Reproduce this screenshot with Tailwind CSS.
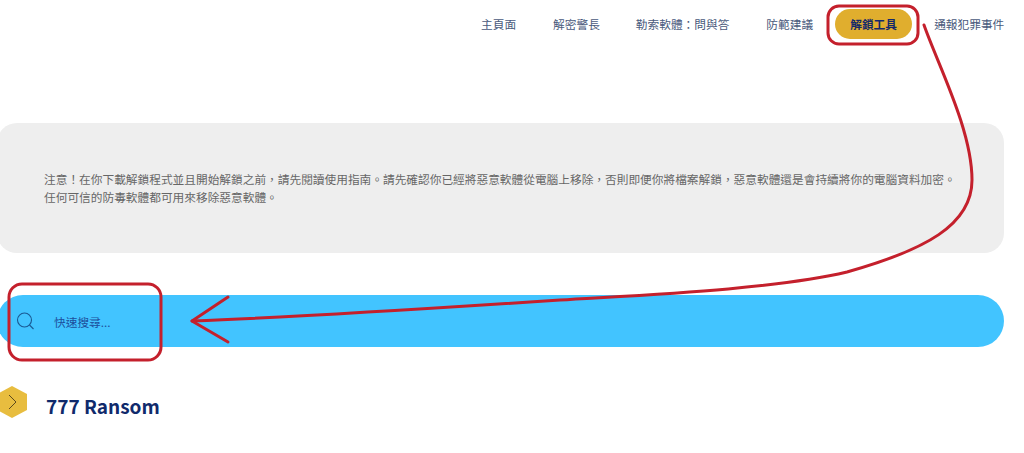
<!DOCTYPE html>
<html lang="zh-Hant">

<head>
    <meta charset="UTF-8">
    <meta name="viewport" content="width=device-width, initial-scale=1.0">
    <script src="https://cdn.jsdelivr.net/npm/@tailwindcss/browser@4"></script>
    <title>解鎖工具</title>
</head>

<body class="bg-white overflow-hidden font-['Noto_Sans_CJK_TC',sans-serif]">
    <div class="relative w-[1024px] h-[453px] overflow-hidden">
        <nav class="flex items-center h-[48px] pl-[481px] text-[11.7px] text-[#4a5a7c] whitespace-nowrap">
            <a class="mr-[37px]">主頁面</a>
            <a class="mr-[36px]">解密警長</a>
            <a class="mr-[37px]">勒索軟體&#xFF1A;問與答</a>
            <a class="mr-[22px]">防範建議</a>
            <a class="flex items-center justify-center w-[77px] h-[30px] rounded-full bg-[#e0ae2e] font-bold text-[#14296b] mr-[22px]">解鎖工具</a>
            <a>通報犯罪事件</a>
        </nav>

        <div class="mt-[75px] -ml-[3px] w-[1007px] h-[130px] flex items-center rounded-[20px] bg-[#eeeeee] pl-[47px] text-[11.7px] leading-[18px] text-[#666666] whitespace-nowrap">
            <p>注意&#xFF01;在你下載解鎖程式並且開始解鎖之前&#xFF0C;請先閱讀使用指南&#x3002;請先確認你已經將惡意軟體從電腦上移除&#xFF0C;否則即便你將檔案解鎖&#xFF0C;惡意軟體還是會持續將你的電腦資料加密&#x3002;<br>任何可信的防毒軟體都可用來移除惡意軟體&#x3002;</p>
        </div>

        <div class="mt-[42px] -ml-[3px] w-[1007px] h-[52px] flex items-center rounded-[26px] bg-[#42c4ff] pl-[19px] text-[11.7px] text-[#1d4f9c]">
            <svg class="w-[19px] h-[19px] mr-[19px]" viewBox="0 0 19 19" fill="none" stroke="#1a5a94" stroke-width="1.1">
                <circle cx="8.5" cy="8" r="7"></circle>
                <path d="M13.5 13l4 4"></path>
            </svg>
            <span class="pt-[1px]">快速搜尋...</span>
        </div>

        <div class="mt-[39px] flex items-start">
            <svg class="w-[27px] h-[32px] mr-[19px]" viewBox="0 0 27 32">
                <path d="M12 0L27 8v16L12 32L-3 24V8z" fill="#e8bd3f"></path>
                <path d="M9 9l7 7-7 7" fill="none" stroke="#5c4a1e" stroke-width="1"></path>
            </svg>
            <h2 class="mt-[6px] text-[19px] leading-[28px] font-bold text-[#102a6b]">777 Ransom</h2>
        </div>

        <!-- red hand drawn notes on top of the page -->
        <svg class="absolute inset-0 pointer-events-none" width="1024" height="453" viewBox="0 0 1024 453" fill="none" stroke="#c4202c" stroke-width="3" stroke-linecap="round" stroke-linejoin="round">
            <rect x="828" y="6" width="90" height="38" rx="11"></rect>
            <rect x="9" y="284" width="152" height="76" rx="13"></rect>
            <path d="M924 25C938 65 972 130 972 180C972 225 925 250 847 272C770 290 640 295 560 300C440 308 300 317 192 321"></path>
            <path d="M228 297L192 321L228 342"></path>
        </svg>
    </div>
</body>

</html>
